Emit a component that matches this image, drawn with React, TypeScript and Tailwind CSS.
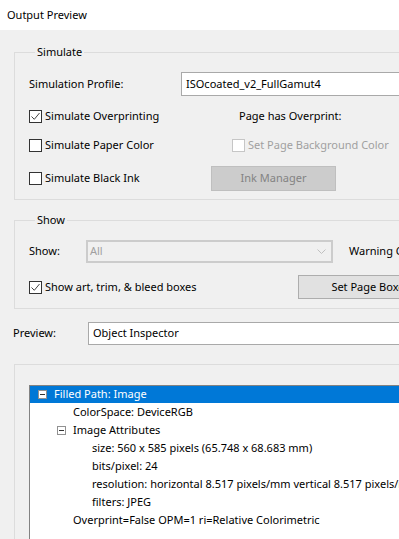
import type { ReactNode } from 'react';

const font = { fontFamily: '"Noto Sans", "Open Sans", sans-serif' };

function Check({ checked = false, disabled = false }: { checked?: boolean; disabled?: boolean }) {
  return (
    <span
      className={`w-[13px] h-[13px] shrink-0 border bg-white flex items-center justify-center ${
        disabled ? 'border-[#c6c6c6]' : 'border-[#333333]'
      }`}
    >
      {checked && (
        <svg width="11" height="11" viewBox="0 0 11 11">
          <path d="M1.5 5.5 L4.3 8.3 L9.5 2" fill="none" stroke="#444" strokeWidth="1" />
        </svg>
      )}
    </span>
  );
}

function CheckRow({ label, checked, disabled }: { label: string; checked?: boolean; disabled?: boolean }) {
  return (
    <div className="flex items-center gap-[3px]">
      <Check checked={checked} disabled={disabled} />
      <span className={disabled ? 'text-[#a0a0a0]' : 'text-black'}>{label}</span>
    </div>
  );
}

function Group({ title, children, className }: { title?: string; children: ReactNode; className?: string }) {
  return (
    <fieldset className={`border border-[#dcdcdc] ${className ?? ''}`}>
      {title && <legend className="ml-[6px] px-[2px] leading-[16px]">{title}</legend>}
      {children}
    </fieldset>
  );
}

function MinusBox({ left }: { left: string }) {
  return (
    <span className={`w-[9px] h-[9px] border border-[#919191] bg-white flex items-center justify-center shrink-0 ${left}`}>
      <span className="w-[5px] h-px bg-[#333]" />
    </span>
  );
}

const rows: { text: string; indent: string; minus?: boolean }[] = [
  { text: 'ColorSpace: DeviceRGB', indent: 'pl-[43px]' },
  { text: 'Image Attributes', indent: 'pl-[27px]', minus: true },
  { text: 'size: 560 x 585 pixels (65.748 x 68.683 mm)', indent: 'pl-[62px]' },
  { text: 'bits/pixel: 24', indent: 'pl-[62px]' },
  { text: 'resolution: horizontal 8.517 pixels/mm vertical 8.517 pixels/mm', indent: 'pl-[62px]' },
  { text: 'filters: JPEG', indent: 'pl-[62px]' },
  { text: 'Overprint=False OPM=1 ri=Relative Colorimetric', indent: 'pl-[43px]' },
];

export default function App() {
  return (
    <div className="w-[399px] h-[539px] overflow-hidden bg-[#f0f0f0] text-[11px] text-black" style={font}>
      <div className="w-[480px]">
        {/* title */}
        <div className="h-[30px] bg-white flex items-center pl-[7px] pt-[1px] whitespace-nowrap">Output Preview</div>

        <div className="pl-[14px] pt-[14px]">
          {/* Simulate */}
          <Group title="Simulate" className="pl-[14px] pb-[8px] whitespace-nowrap">
            <div className="flex items-center h-[24px] mt-[12px]">
              <span className="w-[152px]">Simulation Profile:</span>
              <div className="flex-1 h-[24px] border border-[#a9a9a9] bg-white flex items-center pl-[4px]">
                ISOcoated_v2_FullGamut4
              </div>
            </div>
            <div className="flex items-center h-[20px] mt-[10px]">
              <div className="w-[210px]">
                <CheckRow label="Simulate Overprinting" checked />
              </div>
              <span>Page has Overprint:</span>
            </div>
            <div className="flex items-center h-[20px] mt-[9px]">
              <div className="w-[203px]">
                <CheckRow label="Simulate Paper Color" />
              </div>
              <CheckRow label="Set Page Background Color" disabled />
            </div>
            <div className="flex items-center h-[25px] mt-[11px]">
              <div className="w-[182px]">
                <CheckRow label="Simulate Black Ink" />
              </div>
              <div className="w-[125px] h-[25px] bg-[#cccccc] border border-[#bfbfbf] text-[#838383] flex items-center justify-center">
                Ink Manager
              </div>
            </div>
          </Group>

          {/* Show */}
          <Group title="Show" className="pl-[14px] pb-[9px] mt-[12px] whitespace-nowrap">
            <div className="flex items-center h-[23px] mt-[12px]">
              <span className="w-[57px]">Show:</span>
              <div className="w-[247px] h-[23px] border-2 border-[#cccccc] bg-[#f0f0f0] flex">
                <span className="flex-1 pl-[2px] text-[#a0a0a0] flex items-center">All</span>
                <span className="w-[19px] flex items-center justify-center">
                  <svg width="9" height="6" viewBox="0 0 9 6">
                    <path d="M0.5 0.5 L4.5 4.5 L8.5 0.5" fill="none" stroke="#c0c0c0" strokeWidth="1" />
                  </svg>
                </span>
              </div>
              <span className="ml-[16px]">Warning Color:</span>
            </div>
            <div className="flex items-center h-[24px] mt-[12px]">
              <div className="w-[269px]">
                <CheckRow label="Show art, trim, &amp; bleed boxes" checked />
              </div>
              <div className="w-[154px] h-[24px] bg-[#e1e1e1] border border-[#adadad] flex items-center justify-center">
                Set Page Boxes...
              </div>
            </div>
          </Group>
        </div>

        {/* Preview */}
        <div className="flex items-center h-[23px] mt-[13px] pl-[13px] whitespace-nowrap">
          <span className="w-[75px]">Preview:</span>
          <div className="flex-1 h-[23px] border border-[#a9a9a9] bg-white flex items-center pl-[4px]">
            Object Inspector
          </div>
        </div>

        <div className="pl-[14px] mt-[19px]">
          <div className="border-l border-t border-[#dcdcdc] h-[200px] pl-[14px] pt-[20px]">
            <div className="border border-[#828282] bg-white h-[180px] whitespace-nowrap">
              <div className="h-[17px] bg-[#0078d7] text-white flex items-center">
                <MinusBox left="ml-[8px]" />
                <span className="ml-[7px]">Filled Path: Image</span>
              </div>
              {rows.map((r) => (
                <div key={r.text} className={`h-[18px] flex items-center ${r.indent}`}>
                  {r.minus && <MinusBox left="mr-[7px]" />}
                  <span>{r.text}</span>
                </div>
              ))}
            </div>
          </div>
        </div>
      </div>
    </div>
  );
}
